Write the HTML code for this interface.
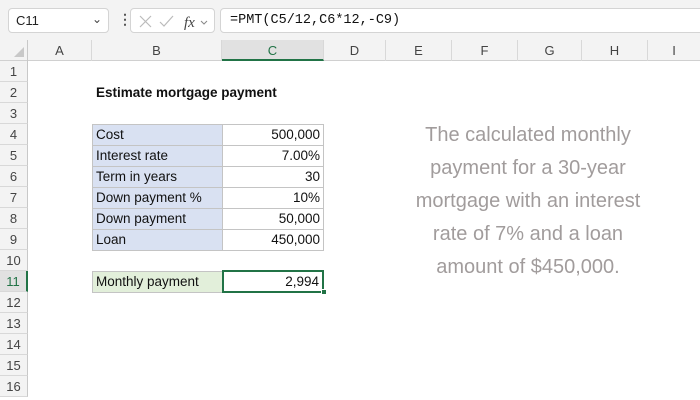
<!DOCTYPE html>
<html><head><meta charset="utf-8"><style>
*{margin:0;padding:0;box-sizing:border-box}
body{width:700px;height:400px;overflow:hidden;background:#fff;font-family:"Liberation Sans",sans-serif;position:relative}
.a{position:absolute}
.top{left:0;top:0;width:700px;height:40px;background:#f3f3f3}
.box{position:absolute;background:#fff;border:1px solid #d4d4d4;border-radius:4px}
.hdr{left:0;top:40px;width:700px;height:21px;background:#f3f3f3;border-bottom:1px solid #d0d0d0}
.ch{position:absolute;top:40px;height:21px;font-size:13px;color:#444;text-align:center;line-height:21px;border-right:1px solid #d8d8d8}
.rh{position:absolute;left:0;width:28px;height:21px;background:#f3f3f3;font-size:13px;color:#444;text-align:center;line-height:21px;border-bottom:1px solid #d8d8d8;border-right:1px solid #c8c8c8}
.c{position:absolute;height:22px;font-size:13.5px;line-height:20px;color:#111;border:1px solid #c4c4c4;padding:0 3px}
.l{left:92px;width:131px;background:#d9e1f2}
.r{left:222px;width:102px;text-align:right;background:transparent}
.n{position:absolute;left:398px;width:260px;text-align:center;font-size:20px;color:#a19c9c;font-family:"Liberation Sans",sans-serif}
</style></head><body>
<div class="a top"></div>
<div class="box" style="left:8px;top:8px;width:101px;height:25px"><span class="a" style="left:7px;top:4px;font-size:13px;color:#222">C11</span><span class="a" style="left:83px;top:3px;font-size:12px;color:#444">⌄</span></div>
<div class="a" style="left:118px;top:11px;font-size:14px;color:#555;font-weight:bold">⋮</div>
<div class="box" style="left:130px;top:8px;width:85px;height:25px">
<svg class="a" style="left:6px;top:5px" width="75" height="16"><path d="M3 2l11 11M14 2L3 13" stroke="#bbb" stroke-width="1.2" fill="none"/><path d="M23 8l4 4 9-10" stroke="#bbb" stroke-width="1.2" fill="none"/><text x="47" y="13" font-family="Liberation Serif" font-style="italic" font-size="15" fill="#444">fx</text><path d="M64 7l3 3 3-3" stroke="#888" fill="none"/></svg></div>
<div class="box" style="left:220px;top:8px;width:490px;height:25px"><span class="a" style="left:9px;top:4px;font-family:'Liberation Mono',monospace;font-size:13.5px;color:#111">=PMT(C5/12,C6*12,-C9)</span></div>
<div class="a hdr"></div>
<div class="a" style="left:0;top:40px;width:28px;height:21px;border-right:1px solid #c8c8c8"><svg width="28" height="21"><path d="M24 7v10H14z" fill="#c8c8c8"/></svg></div>
<div class="ch" style="left:28px;width:64px">A</div>
<div class="ch" style="left:92px;width:130px">B</div>
<div class="ch" style="left:222px;width:102px;background:#e1e1e1;border-bottom:2px solid #217346;color:#217346">C</div>
<div class="ch" style="left:324px;width:62px">D</div>
<div class="ch" style="left:386px;width:66px">E</div>
<div class="ch" style="left:452px;width:66px">F</div>
<div class="ch" style="left:518px;width:64px">G</div>
<div class="ch" style="left:582px;width:66px">H</div>
<div class="ch" style="left:648px;width:52px;border-right:none">I</div>
<div class="rh" style="top:61px">1</div><div class="rh" style="top:82px">2</div><div class="rh" style="top:103px">3</div><div class="rh" style="top:124px">4</div><div class="rh" style="top:145px">5</div><div class="rh" style="top:166px">6</div><div class="rh" style="top:187px">7</div><div class="rh" style="top:208px">8</div><div class="rh" style="top:229px">9</div><div class="rh" style="top:250px">10</div>
<div class="rh" style="top:271px;background:#e1e1e1;color:#217346;border-right:2px solid #217346">11</div>
<div class="rh" style="top:292px">12</div><div class="rh" style="top:313px">13</div><div class="rh" style="top:334px">14</div><div class="rh" style="top:355px">15</div><div class="rh" style="top:376px">16</div>
<div class="a" style="left:96px;top:85px;font-size:13.5px;font-weight:bold;color:#111">Estimate mortgage payment</div>
<div class="c l" style="top:124px">Cost</div><div class="c r" style="top:124px">500,000</div>
<div class="c l" style="top:145px">Interest rate</div><div class="c r" style="top:145px">7.00%</div>
<div class="c l" style="top:166px">Term in years</div><div class="c r" style="top:166px">30</div>
<div class="c l" style="top:187px">Down payment %</div><div class="c r" style="top:187px">10%</div>
<div class="c l" style="top:208px">Down payment</div><div class="c r" style="top:208px">50,000</div>
<div class="c l" style="top:229px">Loan</div><div class="c r" style="top:229px">450,000</div>
<div class="c l" style="top:271px;background:#e2efda">Monthly payment</div>
<div class="c r" style="top:270px;height:23px;border:2px solid #217346;line-height:19px;background:#fff">2,994</div>
<div class="a" style="left:321px;top:289px;width:6px;height:6px;background:#217346;border:1px solid #fff"></div>
<div class="n" style="top:124px">The calculated monthly</div>
<div class="n" style="top:157px">payment for a 30-year</div>
<div class="n" style="top:190px">mortgage with an interest</div>
<div class="n" style="top:223px">rate of 7% and a loan</div>
<div class="n" style="top:256px">amount of $450,000.</div>
</body></html>
